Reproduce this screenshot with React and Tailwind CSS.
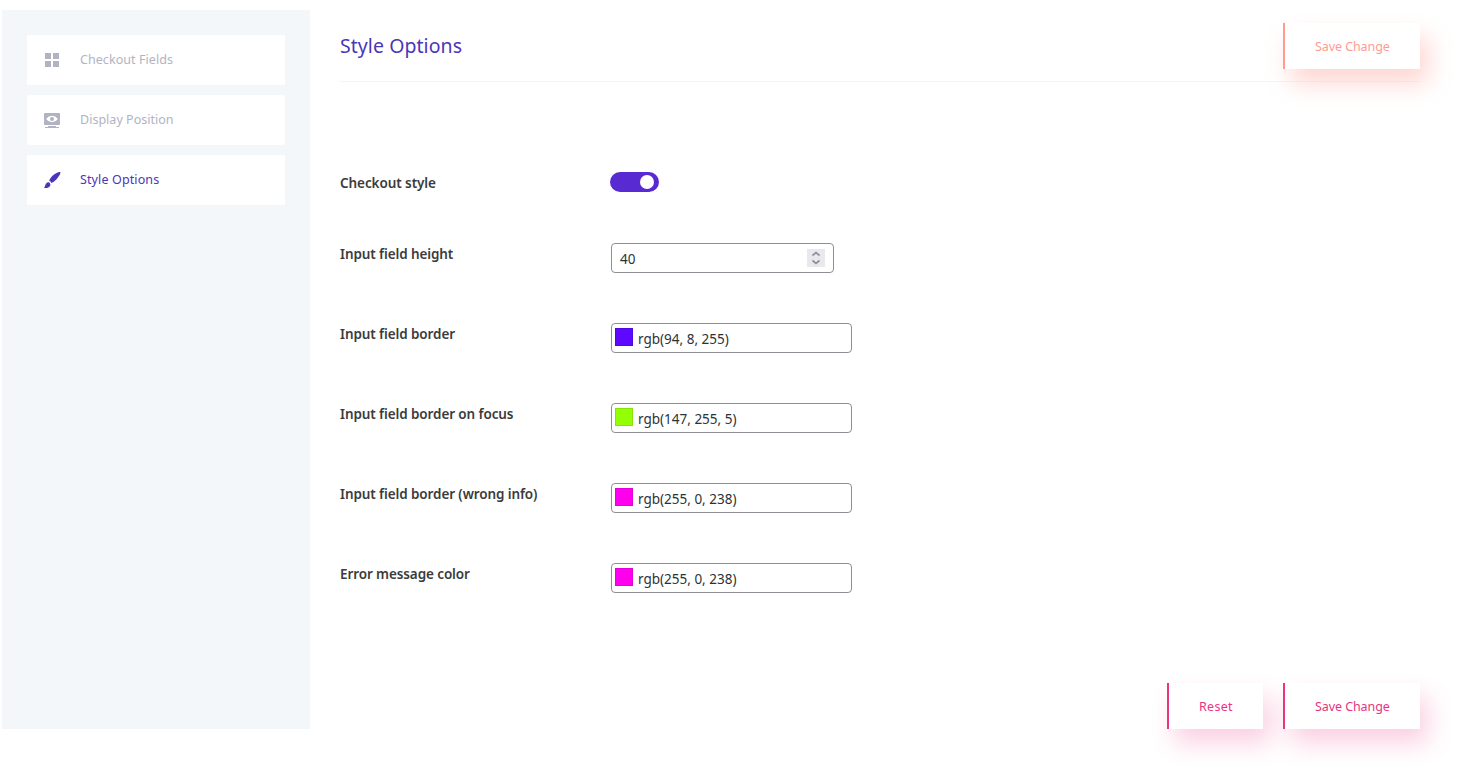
import React from "react";

function GridIcon() {
  return (
    <svg width="18" height="18" viewBox="0 0 18 18" fill="currentColor" shapeRendering="crispEdges">
      <path d="M2 2h6v6H2zM10 2h6v6h-6zM2 10h6v6H2zM10 10h6v6h-6z" />
    </svg>
  );
}

function DisplayIcon() {
  return (
    <svg width="18" height="18" viewBox="0 0 18 18" fill="currentColor">
      <path
        fillRule="evenodd"
        d="M1.8 2h14.4q.8 0 .8.8v10.4q0 .8-.8.8H1.8q-.8 0-.8-.8V2.8q0-.8.8-.8zM3 8Q5.600 4.700 9 4.700T15 8Q12.400 11.200 9 11.200T3 8zM9 6a2.050 2.050 0 1 0 0 4.100A2.050 2.050 0 0 0 9 6z"
      />
      <path d="M5 15h8v1h3v1H2v-1h3z" />
    </svg>
  );
}

function BrushIcon() {
  return (
    <svg width="18" height="18" viewBox="0 0 18 18" fill="currentColor">
      <path d="M17.300 1.100C17.900 2.500 15.600 6.200 12.800 9.100C11.200 10.700 9.600 11.700 8.300 12Q7.800 10.100 6.200 9.700C6.800 8.100 8.200 6 10.100 4.300C12.600 2 15.900.6 17.300 1.100z" />
      <path d="M5.600 11.200C7.200 11.800 7.700 13.400 7.200 14.800C6.300 16.900 3.600 17.300.8 17C2 16.200 2 14.900 2.500 13.600C3.100 12 4.300 10.900 5.600 11.200z" />
    </svg>
  );
}

function NavItem({ icon, label, active, tracking }) {
  return (
    <a className={`flex h-[50px] items-center bg-white pl-4 ${active ? "text-[#4a36b8]" : "text-[#b2b3c2]"}`}>
      {icon}
      <span className={`ml-[19px] whitespace-nowrap text-[12.5px] leading-5 ${tracking}`}>{label}</span>
    </a>
  );
}

function ActionButton({ label, muted, className }) {
  const tone = muted
    ? "border-[#ff9b92] text-[#ff9b92] shadow-[8px_14px_25px_rgba(255,155,146,0.42)]"
    : "border-[#e8357f] text-[#e8357f] shadow-[8px_14px_25px_rgba(232,53,127,0.23)]";
  return (
    <button className={`h-[46px] border-l-2 bg-white pt-0.5 pl-[30px] text-left text-[12.5px] whitespace-nowrap ${tone} ${className}`}>
      {label}
    </button>
  );
}

function Row({ label, children }) {
  return (
    <div className="flex h-20 items-start">
      <div className="w-[271px] whitespace-nowrap text-[13.500px] leading-[22px] font-[560] tracking-[-0.1px] text-[#3b3b3b]">{label}</div>
      {children}
    </div>
  );
}

function ColorField({ swatch, value }) {
  return (
    <div className="flex h-[30px] w-[241px] items-start rounded-[4px] border border-[#8c8f94] bg-white pl-[3px]">
      <span className={`mt-1 size-[18px] border border-black/10 ${swatch}`} />
      <span className="ml-[5px] whitespace-nowrap text-[13.500px] leading-[31px] text-[#2c3338]">{value}</span>
    </div>
  );
}

export default function App() {
  return (
    <div className="flex h-[772px] overflow-hidden bg-white pt-2.5 pl-0.5 font-['Noto_Sans','Open_Sans',sans-serif]">
      <aside className="flex h-[719px] w-[308px] flex-col gap-2.5 bg-[#f3f7fa] p-[25px]">
        <NavItem icon={<GridIcon />} label="Checkout Fields" tracking="tracking-[0.06px]" />
        <NavItem icon={<DisplayIcon />} label="Display Position" tracking="tracking-[0.02px]" />
        <NavItem icon={<BrushIcon />} label="Style Options" active tracking="tracking-[0.12px]" />
      </aside>

      <main className="ml-[29px] flex h-[719px] w-[1081px] flex-col">
        <header className="flex h-[72px] justify-between border-b border-[#f5f5f5] pt-[13px]">
          <h1 className="mt-2 ml-px text-[19.500px] leading-[30px] tracking-[0.06px] text-[#4a36b8]">Style Options</h1>
          <ActionButton label="Save Change" muted className="w-[137px] tracking-[-0.08px]" />
        </header>

        <section className="mt-[90px] ml-px">
          <div className="flex h-[71px] items-start">
            <div className="w-[270px] text-[13.500px] leading-[22px] font-[560] tracking-[-0.08px] text-[#3b3b3b]">Checkout style</div>
            <div className="flex h-5 w-[49px] items-center justify-end rounded-full bg-[#572bd1] pr-[5px]">
              <span className="size-3.5 rounded-full bg-white" />
            </div>
          </div>
          <Row label="Input field height">
            <div className="flex h-[30px] w-[223px] items-center justify-between rounded-[4px] border border-[#8c8f94] bg-white pr-2 pl-2">
              <span className="pt-0.5 text-[13.500px] leading-[28px] text-[#2c3338]">40</span>
              <span className="flex size-[18px] items-center justify-center bg-[#e9e9ed] text-[#8f8f9d]">
                <svg width="18" height="18" viewBox="0 0 18 18" fill="none" stroke="currentColor" strokeWidth="1.7">
                  <path d="M5.500 6.500 9 3.500 12.500 6.500M5.500 11.500 9 14.500 12.500 11.500" />
                </svg>
              </span>
            </div>
          </Row>
          <Row label="Input field border">
            <ColorField swatch="bg-[rgb(94,8,255)]" value="rgb(94, 8, 255)" />
          </Row>
          <Row label="Input field border on focus">
            <ColorField swatch="bg-[rgb(147,255,5)]" value="rgb(147, 255, 5)" />
          </Row>
          <Row label="Input field border (wrong info)">
            <ColorField swatch="bg-[rgb(255,0,238)]" value="rgb(255, 0, 238)" />
          </Row>
          <Row label="Error message color">
            <ColorField swatch="bg-[rgb(255,0,238)]" value="rgb(255, 0, 238)" />
          </Row>
        </section>

        <footer className="mt-auto flex justify-end gap-5">
          <ActionButton label="Reset" className="w-24 tracking-[0.3px]" />
          <ActionButton label="Save Change" className="w-[137px] tracking-[-0.08px]" />
        </footer>
      </main>
    </div>
  );
}
